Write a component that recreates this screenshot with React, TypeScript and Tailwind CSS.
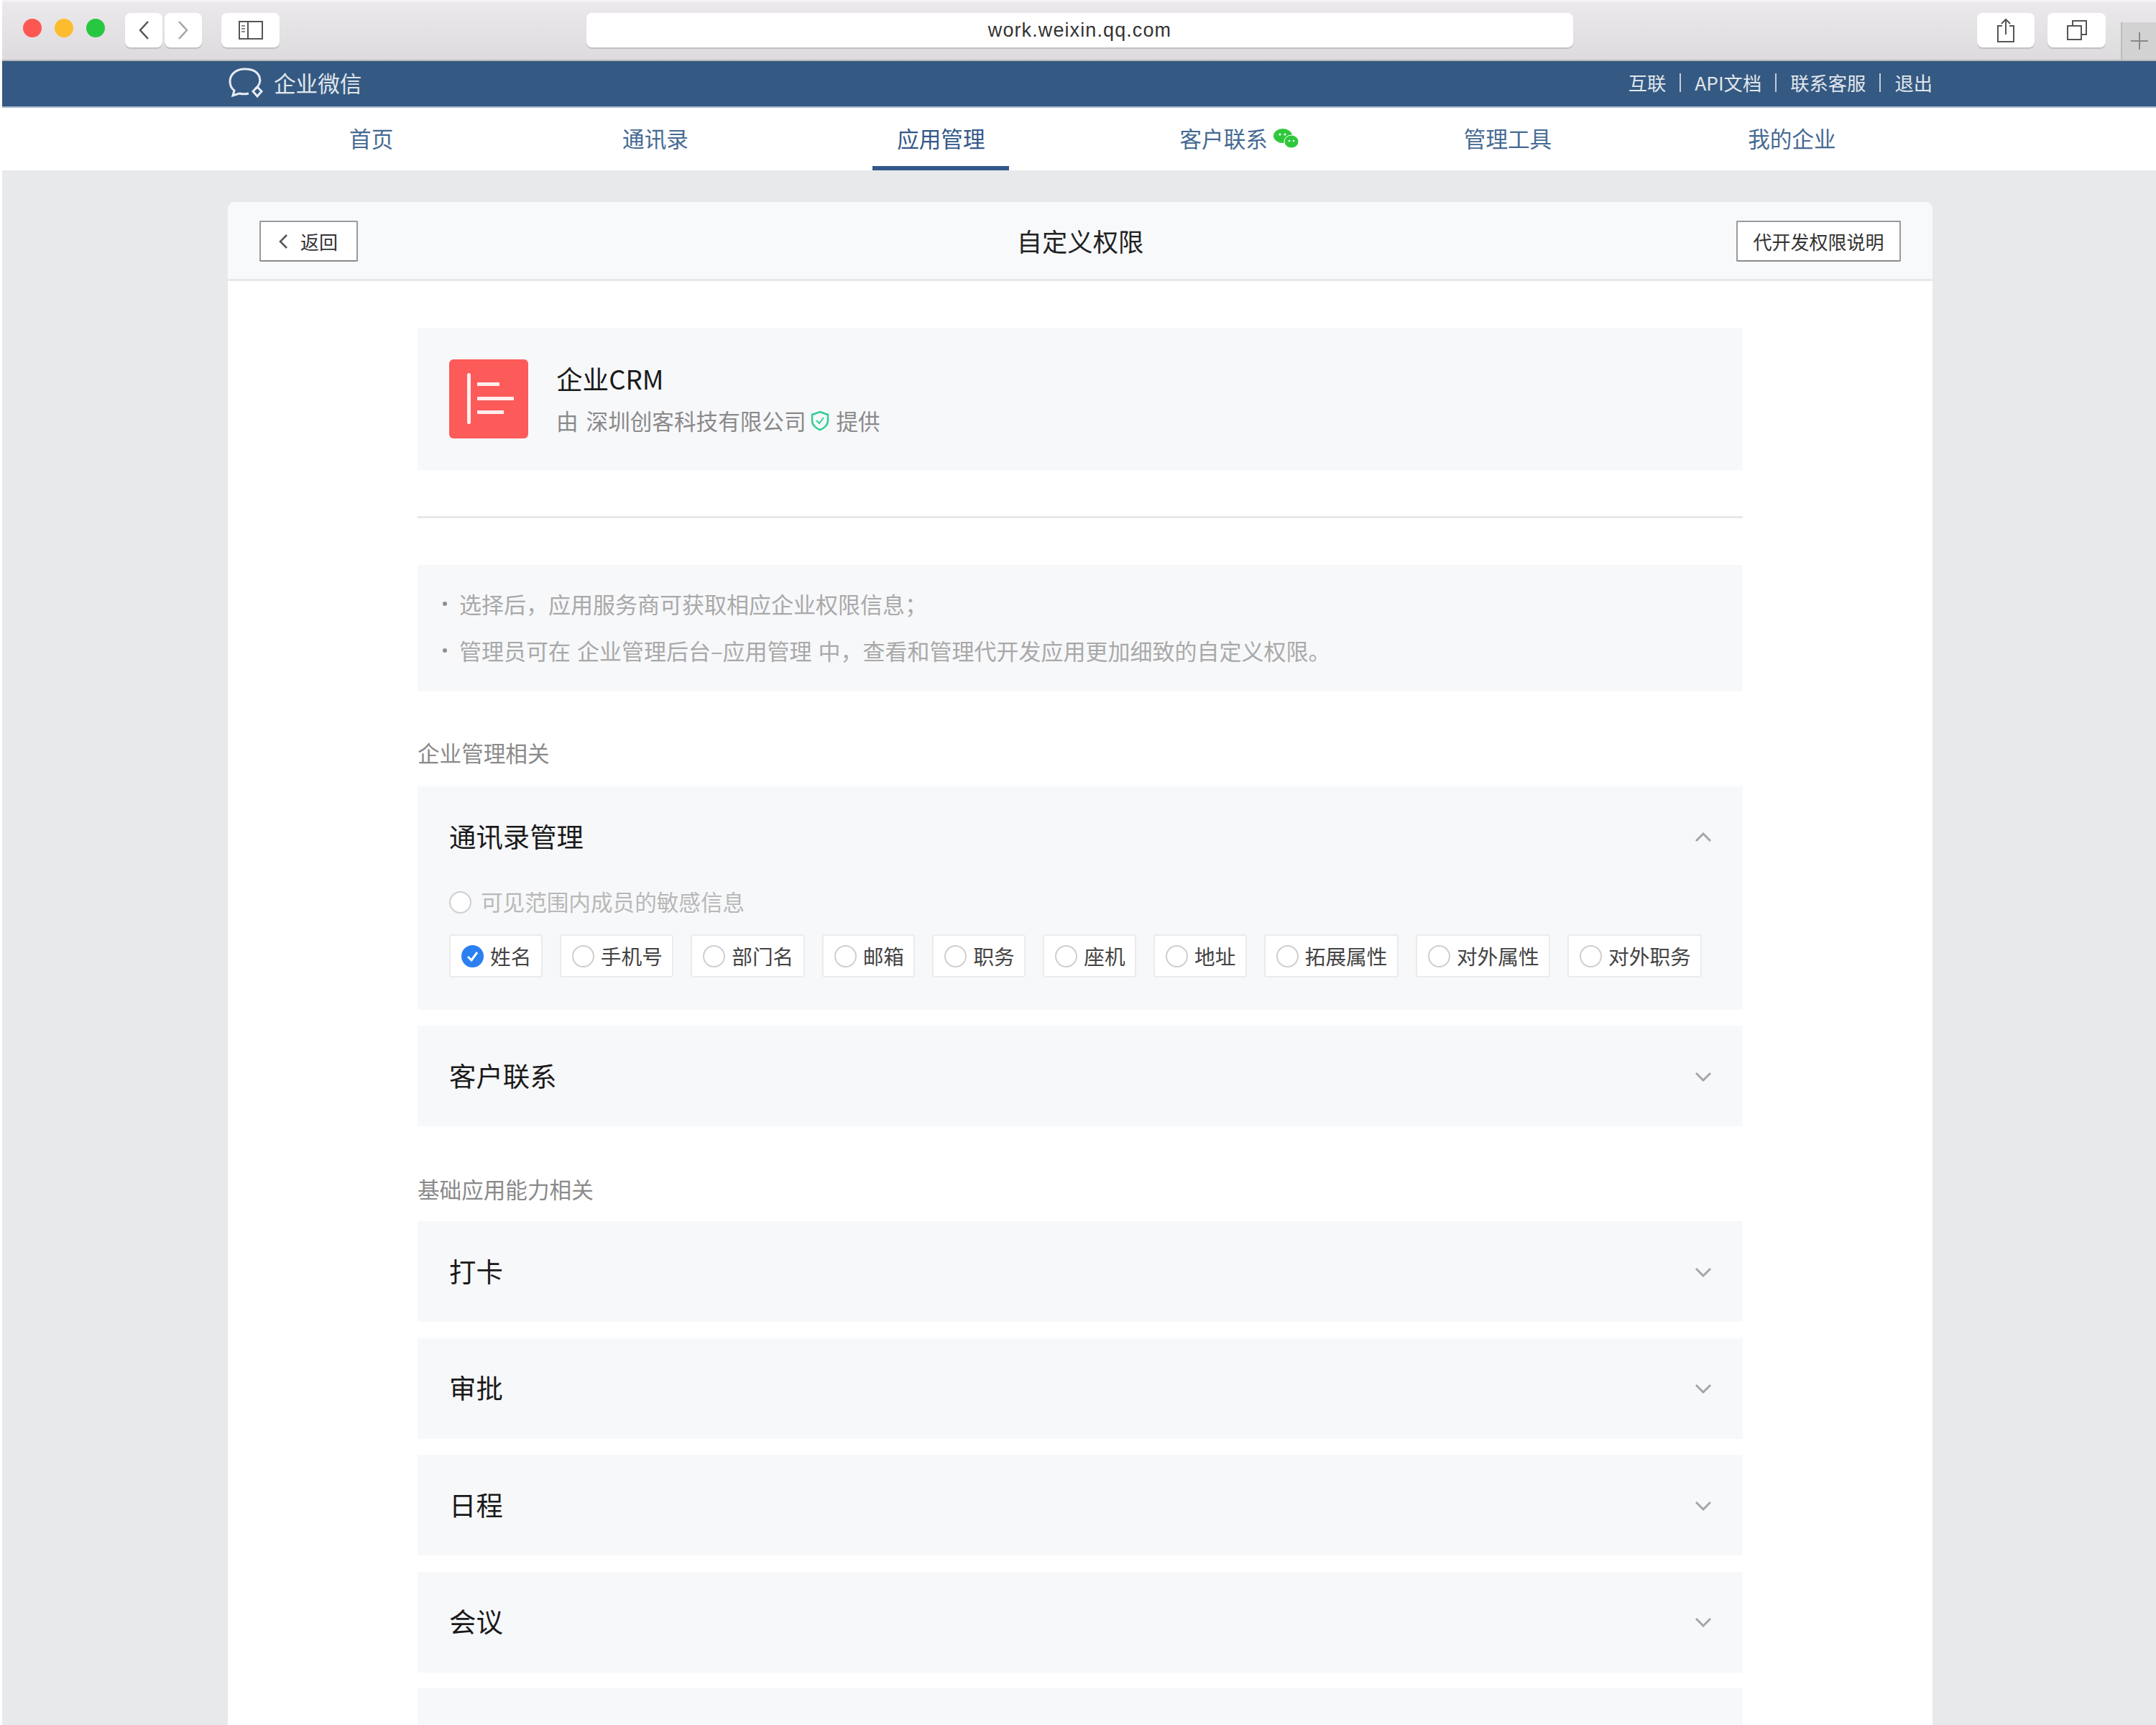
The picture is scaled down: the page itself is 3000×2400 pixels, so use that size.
const navItems = ['首页', '通讯录', '应用管理', '客户联系', '管理工具', '我的企业']
const chips = ['姓名', '手机号', '部门名', '邮箱', '职务', '座机', '地址', '拓展属性', '对外属性', '对外职务']
const closedRows = ['打卡', '审批', '日程', '会议']

function Chevron({ up = false }: { up?: boolean }) {
    return (
        <svg width="24" height="14" viewBox="0 0 24 14" fill="none" stroke="#a6a6a6" strokeWidth="3" className="mt-[3px]">
            <path d={up ? 'M2 12 L12 2 L22 12' : 'M2 2 L12 12 L22 2'} />
        </svg>
    )
}

function Radio({ checked = false }: { checked?: boolean }) {
    if (checked) {
        return (
            <svg width="31" height="31" viewBox="0 0 31 31" className="shrink-0">
                <circle cx="15.5" cy="15.5" r="15.5" fill="#2b7ff0" />
                <path d="M9 16 L14 21 L22 10" fill="none" stroke="#fff" strokeWidth="3" />
            </svg>
        )
    }
    return <span className="w-[31px] h-[31px] shrink-0 rounded-full border-2 border-[#cfcfcf] bg-white" />
}

function ToolButton({ className, children }: { className: string; children: React.ReactNode }) {
    return (
        <div className={`h-[48px] bg-white rounded-[8px] shadow-[0_2px_1px_rgba(0,0,0,0.14)] flex items-center justify-center ${className}`}>
            {children}
        </div>
    )
}

function Toolbar() {
    return (
        <div className="relative h-[85px] bg-gradient-to-b from-[#ece9ec] to-[#dedbde] border-t-[3px] border-[#f3f2f4] border-b-2 border-b-[#b9b9bb] flex items-center pb-[2px]">
            <div className="flex items-center gap-[18px] ml-[29px] mb-[6px]">
                <span className="w-[26px] h-[26px] rounded-full bg-[#fc5753]" />
                <span className="w-[26px] h-[26px] rounded-full bg-[#fdbc2e]" />
                <span className="w-[26px] h-[26px] rounded-full bg-[#27c73f]" />
            </div>
            <div className="flex gap-[3px] ml-[28px]">
                <ToolButton className="w-[52px]">
                    <svg width="16" height="28" viewBox="0 0 16 28" fill="none" stroke="#555" strokeWidth="2.5">
                        <path d="M14 2 L3 14 L14 26" />
                    </svg>
                </ToolButton>
                <ToolButton className="w-[52px]">
                    <svg width="16" height="28" viewBox="0 0 16 28" fill="none" stroke="#a5a5a5" strokeWidth="2.5">
                        <path d="M2 2 L13 14 L2 26" />
                    </svg>
                </ToolButton>
            </div>
            <ToolButton className="w-[81px] ml-[27px]">
                <svg width="34" height="26" viewBox="0 0 34 26" fill="none" stroke="#555" strokeWidth="2">
                    <rect x="1" y="1" width="32" height="24" />
                    <path d="M13 1 V25" />
                    <path d="M4 7 H9 M4 11 H9 M4 15 H9" stroke="#888" />
                </svg>
            </ToolButton>
            <ToolButton className="w-[1373px] ml-[427px] font-['Liberation_Sans',sans-serif] text-[27px] tracking-[1.1px] text-[#333]">
                work.weixin.qq.com
            </ToolButton>
            <ToolButton className="w-[80px] ml-[562px]">
                <svg width="26" height="34" viewBox="0 0 26 34" fill="none" stroke="#555" strokeWidth="2">
                    <path d="M8 11 H2 V33 H24 V11 H18" />
                    <path d="M13 23 V2 M7 8 L13 2 L19 8" />
                </svg>
            </ToolButton>
            <ToolButton className="w-[81px] ml-[18px]">
                <svg width="28" height="28" viewBox="0 0 28 28" fill="none" stroke="#555" strokeWidth="2">
                    <rect x="1" y="8" width="19" height="19" />
                    <path d="M8 8 V1 H27 V20 H20" />
                </svg>
            </ToolButton>
            {/* new tab plus sits on the edge of the bar */}
            <div className="absolute right-0 bottom-0 w-[49px] h-[52px] bg-[#d2d2d2] border-l-2 border-[#bdbdbd] flex items-center justify-center">
                <svg width="26" height="26" viewBox="0 0 26 26" stroke="#888" strokeWidth="2">
                    <path d="M13 1 V25 M1 13 H25" />
                </svg>
            </div>
        </div>
    )
}

function TopBar() {
    return (
        <div className="h-[65px] bg-[#345982] border-b-2 border-[#a9bcd3] flex items-center pl-[314px] pr-[311px] pb-[2px] justify-between text-white/85">
            <div className="flex items-center gap-[11px]">
                <svg width="53" height="44" viewBox="0 0 53 44" fill="none" stroke="#e6ebf1" strokeWidth="3">
                    <path d="M38 30 C44 25 46 19 44 13 C41 5 33 2 24 2 C12 2 3 9 3 19 C3 25 5 29 9 32 L7 39 L16 36 C20 37 25 37 29 36" />
                    <path d="M41 27 L47 33 L41 40 L35 33 Z" />
                </svg>
                <span className="text-[30.6px] leading-none">企业微信</span>
            </div>
            <div className="flex items-center text-[26.3px] leading-none">
                <span>互联</span>
                <span className="w-[2px] h-[26px] bg-white/70 mx-[19px]" />
                <span>API文档</span>
                <span className="w-[2px] h-[26px] bg-white/70 mx-[19px]" />
                <span>联系客服</span>
                <span className="w-[2px] h-[26px] bg-white/70 mx-[19px]" />
                <span>退出</span>
            </div>
        </div>
    )
}

function NavBar() {
    return (
        <div className="h-[87px] bg-white pl-[316px]">
            <div className="w-[2372px] h-full grid grid-cols-6">
                {navItems.map((item, i) => (
                    <div key={item} className="relative flex justify-center items-center pb-[2px] text-[30.6px] text-[#466a92]">
                        <span className={i === 2 ? 'relative h-[calc(100%+2px)] -mb-[2px] ml-[4px] flex items-center justify-center text-[#34588a] w-[190px] border-b-[6px] border-[#34588a] pt-[4px]' : 'relative'}>
                            {item}
                            {i === 3 && (
                                <svg width="35" height="28" viewBox="0 0 35 28" className="absolute left-[131px] top-[9px]">
                                    <ellipse cx="13" cy="10" rx="13" ry="10" fill="#2fc83c" />
                                    <ellipse cx="25" cy="18" rx="10" ry="9" fill="#2fc83c" stroke="#fff" strokeWidth="1" />
                                    <circle cx="9" cy="8" r="1.6" fill="#fff" />
                                    <circle cx="16" cy="8" r="1.6" fill="#fff" />
                                    <circle cx="22" cy="17" r="1.3" fill="#fff" />
                                    <circle cx="28" cy="17" r="1.3" fill="#fff" />
                                </svg>
                            )}
                        </span>
                    </div>
                ))}
            </div>
        </div>
    )
}

function CardHeader() {
    return (
        <div className="h-[110px] pt-[2px] bg-[#f8f9fb] border-b-[3px] border-[#e7e8eb] rounded-t-[10px] px-[44px] flex items-center justify-between relative">
            <button className="w-[137px] h-[57px] bg-white border-2 border-[#9a9a9a] border-b-[#8b8b8b] rounded-[2px] flex items-center gap-[17px] pl-[24px] text-[26px] text-[#333]">
                <svg width="14" height="22" viewBox="0 0 14 22" fill="none" stroke="#555" strokeWidth="2.5">
                    <path d="M12 2 L3 11 L12 20" />
                </svg>
                返回
            </button>
            <div className="absolute left-0 right-0 text-center text-[35.3px] text-[#222] pointer-events-none">自定义权限</div>
            <button className="w-[229px] h-[57px] bg-white border-2 border-[#9a9a9a] border-b-[#8b8b8b] rounded-[2px] text-[26px] text-[#333]">
                代开发权限说明
            </button>
        </div>
    )
}

function AppInfo() {
    return (
        <div className="h-[198px] bg-[#f7f8fa] flex items-center pl-[44px] gap-[39px]">
            <div className="relative w-[110px] h-[110px] rounded-[6px] bg-[#fd5a5a] shrink-0">
                {/* logo bars */}
                <span className="absolute left-[25px] top-[19px] w-[5px] h-[71px] bg-white/90 rounded-full" />
                <span className="absolute left-[39px] top-[32px] w-[31px] h-[5px] bg-white/90" />
                <span className="absolute left-[39px] top-[52px] w-[51px] h-[5px] bg-white/90" />
                <span className="absolute left-[39px] top-[71px] w-[37px] h-[5px] bg-white/90" />
            </div>
            <div className="flex flex-col pt-[2px]">
                <div className="text-[36.6px] leading-[54px] text-[#1a1a1a]">企业CRM</div>
                <div className="flex items-center text-[30.6px] leading-[54px] text-[#8a8a8a] mt-[4px]">
                    <span className="mr-[11px]">由</span>
                    深圳创客科技有限公司
                    <svg width="26" height="29" viewBox="0 0 26 29" fill="none" className="ml-[6px] mr-[10px]">
                        <path d="M13 2 L24 6 V14 C24 20 19 25 13 27 C7 25 2 20 2 14 V6 Z" stroke="#2fce91" strokeWidth="2.5" />
                        <path d="M8 14 L12 18 L18 10" stroke="#2fce91" strokeWidth="2" />
                    </svg>
                    提供
                </div>
            </div>
        </div>
    )
}

function Notice() {
    const lines = ['选择后，应用服务商可获取相应企业权限信息；', '管理员可在 企业管理后台–应用管理 中，查看和管理代开发应用更加细致的自定义权限。']
    return (
        <div className="h-[176px] bg-[#f7f8fa] pl-[35px] pt-[21px] text-[31px] leading-[65px] [word-spacing:2px] text-[#a9a9a9]">
            {lines.map((line) => (
                <div key={line} className="flex items-center whitespace-pre">
                    <span className="w-[6px] h-[6px] rounded-full bg-[#8f8f8f] mr-[17px]" />
                    {line}
                </div>
            ))}
        </div>
    )
}

function SectionLabel({ children, className }: { children: string; className: string }) {
    return <div className={`h-[132px] text-[30.6px] leading-[46px] text-[#8a8a8a] ${className}`}>{children}</div>
}

function Row({ title }: { title: string }) {
    return (
        <div className="h-[140px] pb-[2px] bg-[#f7f8fa] px-[44px] pr-[43px] flex items-center justify-between text-[37.4px] text-[#1a1a1a]">
            {title}
            <Chevron />
        </div>
    )
}

function ContactsPanel() {
    return (
        <div className="h-[311px] bg-[#f7f8fa] px-[44px] pr-[43px]">
            <div className="h-[140px] pb-[2px] flex items-center justify-between text-[37.4px] text-[#1a1a1a]">
                通讯录管理
                <Chevron up />
            </div>
            <div className="h-[42px] flex items-center gap-[13px] text-[30.6px] text-[#b8b8b8]">
                <Radio />
                可见范围内成员的敏感信息
            </div>
            <div className="flex gap-[24px] mt-[24px]">
                {chips.map((chip, i) => (
                    <div key={chip} className="h-[60px] pl-[15px] pr-[13.4px] shrink-0 whitespace-nowrap bg-white border-2 border-[#ebebed] rounded-[4px] flex items-center gap-[9px] text-[28.7px] leading-none text-[#444]">
                        <Radio checked={i === 0} />
                        {chip}
                    </div>
                ))}
            </div>
        </div>
    )
}

export default function App() {
    return (
        <div className="relative w-[3000px] h-[2400px] overflow-hidden flex bg-[#e8e9eb] font-['Noto_Sans_CJK_SC','Noto_Sans',sans-serif]">
            <div className="w-[3px] shrink-0 bg-white" />
            <div className="flex-1 min-w-0">
                <Toolbar />
                <TopBar />
                <NavBar />
                <main className="pt-[44px] pl-[314px]">
                    <div className="w-[2372px] bg-white rounded-t-[10px] h-[2200px]">
                        <CardHeader />
                        <div className="px-[264px] pt-[65px] flex flex-col">
                            <AppInfo />
                            <div className="h-[3px] bg-[#e7e8eb] mt-[64px] mb-[65px]" />
                            <Notice />
                            <SectionLabel className="pt-[62px]">企业管理相关</SectionLabel>
                            <ContactsPanel />
                            <div className="mt-[22px]">
                                <Row title="客户联系" />
                            </div>
                            <SectionLabel className="pt-[64px]">基础应用能力相关</SectionLabel>
                            <div className="flex flex-col gap-[22.5px]">
                                {closedRows.map((title) => (
                                    <Row key={title} title={title} />
                                ))}
                                <div className="h-[140px] bg-[#f7f8fa]" />
                            </div>
                        </div>
                    </div>
                </main>
            </div>
        </div>
    )
}
